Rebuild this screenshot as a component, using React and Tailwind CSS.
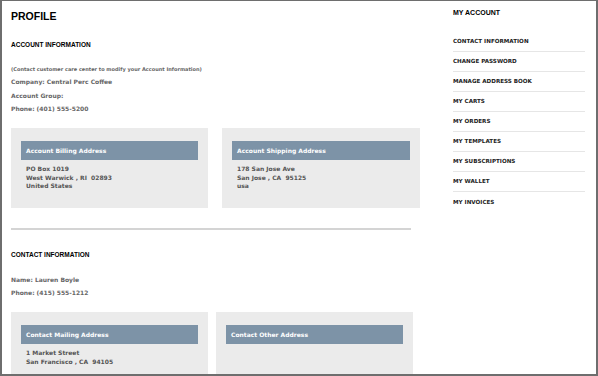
import React from "react";

const menu = [
  "CONTACT INFORMATION",
  "CHANGE PASSWORD",
  "MANAGE ADDRESS BOOK",
  "MY CARTS",
  "MY ORDERS",
  "MY TEMPLATES",
  "MY SUBSCRIPTIONS",
  "MY WALLET",
  "MY INVOICES",
];

function AddressCard({ title, lines, padBottom }) {
  return (
    <div className={`bg-[#ebebeb] pt-[13px] px-[10px] ${padBottom}`}>
      <div className="h-[19px] bg-[#7d93a7] pl-[5px] flex items-center text-white text-[6px] font-bold">
        {title}
      </div>
      <div className="mt-[5px] pl-[5px] text-[#555] text-[6px] font-bold leading-[8.6px] whitespace-pre">
        {lines.map((l, i) => (
          <div key={i}>{l}</div>
        ))}
      </div>
    </div>
  );
}

export default function App() {
  return (
    <div className="w-[598px] h-[376px] overflow-hidden bg-white border-t border-l-2 border-r-2 border-b-2 border-[#6e6e6e] flex font-['DejaVu_Sans',sans-serif]">
      {/* Main column */}
      <div className="w-[418px] pl-[9px] shrink-0">
        <h1 className="pt-[9px] text-[10.5px] leading-[12px] font-bold text-black font-['Liberation_Sans',Arial,sans-serif]">
          PROFILE
        </h1>

        <h2 className="mt-[19px] text-[6.5px] leading-[8px] font-bold text-black font-['Liberation_Sans',Arial,sans-serif]">
          ACCOUNT INFORMATION
        </h2>
        <p className="mt-[16px] text-[5px] leading-[8px] font-bold text-[#666]">
          (Contact customer care center to modify your Account Information)
        </p>
        <div className="mt-[2px] text-[6px] font-bold text-[#666] leading-[13.5px]">
          <div>Company: Central Perc Coffee</div>
          <div>Account Group:</div>
          <div>Phone: (401) 555-5200</div>
        </div>

        <div className="mt-[12.5px] grid grid-cols-[197px_198px] gap-[14px]">
          <AddressCard
            title="Account Billing Address"
            lines={["PO Box 1019", "West Warwick , RI  02893", "United States"]}
            padBottom="pb-[17px]"
          />
          <AddressCard
            title="Account Shipping Address"
            lines={["178 San Jose Ave", "San Jose , CA  95125", "usa"]}
            padBottom="pb-[17px]"
          />
        </div>

        <div className="mt-[20px] w-[400px] h-[2px] bg-[#d4d4d4]" />

        <h2 className="mt-[21.5px] text-[6.5px] leading-[8px] font-bold text-black font-['Liberation_Sans',Arial,sans-serif]">
          CONTACT INFORMATION
        </h2>
        <div className="mt-[14px] text-[6px] font-bold text-[#666] leading-[13px]">
          <div>Name: Lauren Boyle</div>
          <div>Phone: (415) 555-1212</div>
        </div>

        <div className="mt-[13px] grid grid-cols-[197px_197px] gap-[8px]">
          <AddressCard
            title="Contact Mailing Address"
            lines={["1 Market Street", "San Francisco , CA  94105"]}
            padBottom="pb-[20px]"
          />
          <AddressCard title="Contact Other Address" lines={[]} padBottom="pb-[20px]" />
        </div>
      </div>

      {/* Sidebar */}
      <div className="ml-[33px] w-[132px] shrink-0">
        <h3 className="pt-[6.5px] text-[7px] leading-[9px] font-bold text-black font-['Liberation_Sans',Arial,sans-serif]">
          MY ACCOUNT
        </h3>
        <ul className="mt-[15.5px]">
          {menu.map((m) => (
            <li
              key={m}
              className="h-[20px] flex items-center border-b border-[#e6e6e6] last:border-b-0 text-[5.6px] font-bold text-[#222]"
            >
              {m}
            </li>
          ))}
        </ul>
      </div>
    </div>
  );
}
